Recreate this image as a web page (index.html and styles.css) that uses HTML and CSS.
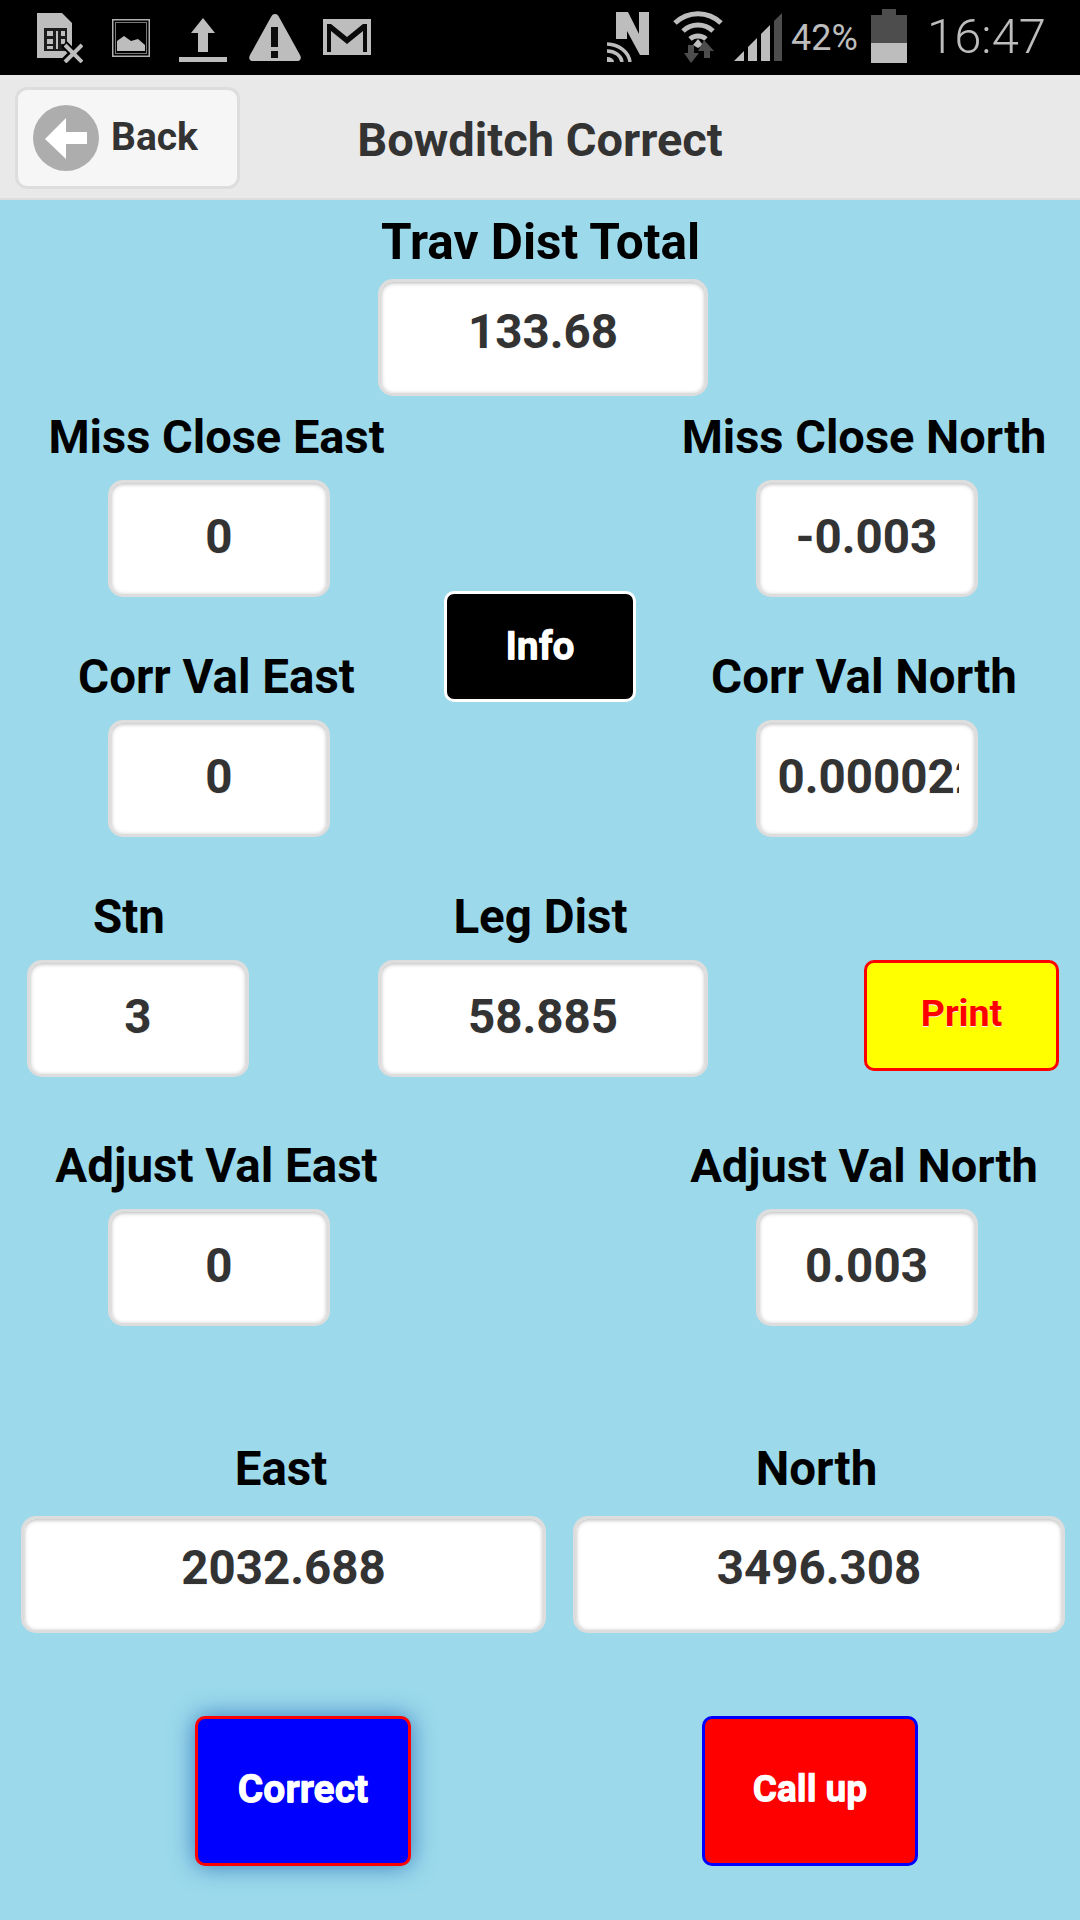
FILE: index.html
```html
<!DOCTYPE html>
<html lang="en">
<head>
    <meta charset="UTF-8">
    <meta name="viewport" content="width=device-width, initial-scale=1.0">
    <title>Bowditch Correct</title>
    <link rel="stylesheet" href="styles.css">
</head>
<body>
    <div class="status-bar">
        <div class="status-left">
            <svg class="ico-sim" width="46" height="50" viewBox="0 0 46 50">
                <path d="M0 0H25L35 10V36L27 45H0Z" fill="#bdbdbd"/>
                <path d="M7 15H30V38H7Z" fill="#1c1c1c"/>
                <path d="M10 18H16V23H10ZM10 26H16V31H10ZM10 33H16V36H10ZM19 18H21V36H19ZM24 18H28V23H24ZM24 26H28V31H24Z" fill="#bdbdbd"/>
                <path d="M27 31L45 49M45 31L27 49" stroke="#000" stroke-width="8"/>
                <path d="M28 32L45 49M45 32L28 49" stroke="#bdbdbd" stroke-width="4"/>
            </svg>
            <svg class="ico-img" width="38" height="38" viewBox="0 0 38 38">
                <rect x="0.75" y="0.75" width="36.5" height="36.5" fill="none" stroke="#b0b0b0" stroke-width="1.5"/>
                <rect x="3.5" y="3.5" width="31" height="31" fill="none" stroke="#7a7a7a" stroke-width="1"/>
                <path d="M5 32V22L12 17L19 22L26 20L33 26V32Z" fill="#bdbdbd"/>
            </svg>
            <svg class="ico-up" width="48" height="44" viewBox="0 0 48 44">
                <path d="M24 0L36 15H29V34H19V15H12Z" fill="#bdbdbd"/>
                <rect x="0" y="39" width="48" height="5" fill="#bdbdbd"/>
            </svg>
            <svg class="ico-warn" width="52" height="47" viewBox="0 0 52 47">
                <path d="M26 0C28 0 29 1 30 3L51 41C53 45 51 47 48 47H4C1 47 -1 45 1 41L22 3C23 1 24 0 26 0Z" fill="#bdbdbd"/>
                <path d="M22 13H29V33H22ZM22 37H29V44H22Z" fill="#0d0d0d"/>
            </svg>
            <svg class="ico-mail" width="48" height="36" viewBox="0 0 48 36">
                <rect width="48" height="36" fill="#bdbdbd"/>
                <path d="M4 33V5H8L24 18L40 5H44V33H40V12L24 25L8 12V33Z" fill="#0a0a0a"/>
            </svg>
        </div>
        <div class="status-right">
            <svg class="ico-n" width="44" height="50" viewBox="0 0 44 50">
                <path d="M9 0H21L32 22V0H42V43H33L20 19V27H9Z" fill="#bdbdbd"/>
                <path d="M0 32A24 20 0 0 1 23 50M0 39A15 12 0 0 1 15 50" fill="none" stroke="#bdbdbd" stroke-width="3.5"/>
                <path d="M0 45A7 5 0 0 1 7 50H0Z" fill="#bdbdbd"/>
            </svg>
            <svg class="ico-wifi" width="50" height="53" viewBox="0 0 50 53">
                <path d="M2 13A33 33 0 0 1 48 13M10 21A22 22 0 0 1 40 21M17 29A12 12 0 0 1 33 29" fill="none" stroke="#bdbdbd" stroke-width="5"/>
                <path d="M20 35L25 29L30 35L25 38Z" fill="#bdbdbd"/>
                <path d="M15 35H21V43H26L18 53L11 43H15Z" fill="#4d4d4d"/>
                <path d="M31 30L41 41H37V48H31V41H25Z" fill="#4d4d4d"/>
            </svg>
            <svg class="ico-signal" width="48" height="48" viewBox="0 0 48 48">
                <path d="M0 48L10 38V48Z" fill="#bdbdbd"/>
                <path d="M14 34L23 25V48H14Z" fill="#bdbdbd"/>
                <path d="M27 21L36 12V48H27Z" fill="#bdbdbd"/>
                <path d="M40 8L48 0V48H40Z" fill="#4d4d4d"/>
            </svg>
            <span class="battery-pct">42%</span>
            <div class="battery">
                <div class="battery-cap"></div>
                <div class="battery-body">
                    <div class="battery-level"></div>
                </div>
            </div>
            <span class="clock">16:47</span>
        </div>
    </div>

    <header class="header">
        <a class="back-btn" href="#">
            <svg width="66" height="66" viewBox="0 0 66 66">
                <circle cx="33" cy="33" r="33" fill="#adadad"/>
                <path d="M12 34L33 13V27H54V39H33V54Z" fill="#fff"/>
            </svg>
            <span>Back</span>
        </a>
        <h1 class="title">Bowditch Correct</h1>
    </header>

    <section class="content">
        <div class="row-top">
            <div class="field">
                <label>Trav Dist Total</label>
                <input class="wide" type="text" value="133.68" readonly>
            </div>
        </div>

        <div class="pair-grid closure">
            <div class="field">
                <label class="tight">Miss Close East</label>
                <input type="text" value="0" readonly>
            </div>
            <button class="btn btn-info">Info</button>
            <div class="field">
                <label class="tight">Miss Close North</label>
                <input type="text" value="-0.003" readonly>
            </div>
            <div class="field">
                <label>Corr Val East</label>
                <input type="text" value="0" readonly>
            </div>
            <div class="field">
                <label>Corr Val North</label>
                <input class="long" type="text" value="0.0000224" readonly>
            </div>
        </div>

        <div class="row-stn">
            <div class="field stn">
                <label>Stn</label>
                <input type="text" value="3" readonly>
            </div>
            <div class="field leg">
                <label>Leg Dist</label>
                <input class="wide" type="text" value="58.885" readonly>
            </div>
            <button class="btn btn-print">Print</button>
        </div>

        <div class="pair-grid adjust">
            <div class="field">
                <label>Adjust Val East</label>
                <input type="text" value="0" readonly>
            </div>
            <div></div>
            <div class="field">
                <label class="tight">Adjust Val North</label>
                <input type="text" value="0.003" readonly>
            </div>
        </div>

        <div class="row-coords">
            <div class="field east">
                <label>East</label>
                <input type="text" value="2032.688" readonly>
            </div>
            <div class="field north">
                <label>North</label>
                <input type="text" value="3496.308" readonly>
            </div>
        </div>

        <div class="row-actions">
            <button class="btn btn-correct">Correct</button>
            <button class="btn btn-callup">Call up</button>
        </div>
    </section>
</body>
</html>
```

FILE: styles.css
```css
* {
    box-sizing: border-box;
}

body {
    margin: 0;
    padding: 0;
    height: 1920px;
    overflow: hidden;
    font-family: Roboto, sans-serif;
    background: #9bd9eb;
}

/* Status bar */
.status-bar {
    height: 75px;
    background: #000;
    display: flex;
    justify-content: space-between;
    align-items: flex-start;
    color: #bdbdbd;
}

.status-left,
.status-right {
    display: flex;
    align-items: flex-start;
}

.status-left svg,
.status-right svg {
    display: block;
    flex: none;
}

.status-left {
    padding-left: 37px;
}

.ico-sim { margin-top: 13px; }
.ico-img { margin: 19px 0 0 29px; }
.ico-up { margin: 18px 0 0 29px; }
.ico-warn { margin: 14px 0 0 22px; }
.ico-mail { margin: 19px 0 0 22px; }

.status-right {
    padding-right: 34px;
}

.ico-n { margin-top: 12px; }
.ico-wifi { margin: 10px 0 0 22px; }
.ico-signal { margin: 13px 0 0 11px; }

.battery-pct {
    font-size: 36px;
    line-height: 36px;
    margin: 20px 0 0 9px;
    width: 72px;
}

.battery {
    width: 36px;
    margin: 9px 0 0 8px;
    display: flex;
    flex-direction: column;
    align-items: center;
}

.battery-cap {
    width: 14px;
    height: 6px;
    background: #4d4d4d;
}

.battery-body {
    width: 36px;
    height: 48px;
    background: #4d4d4d;
    display: flex;
    align-items: flex-end;
}

.battery-level {
    width: 100%;
    height: 20px;
    background: #bdbdbd;
}

.clock {
    font-size: 49px;
    font-weight: 300;
    line-height: 48px;
    margin: 13px 0 0 20px;
}

/* Header */
.header {
    height: 125px;
    background: #e9e9e9;
    border-bottom: 2px solid #ddd;
    padding: 12px 15px 0;
    display: grid;
    grid-template-columns: 1fr auto 1fr;
    align-items: start;
}

.back-btn {
    width: 225px;
    height: 102px;
    background: #f6f6f6;
    border: 3px solid #ddd;
    border-radius: 12px;
    padding: 0 0 2px 15px;
    display: flex;
    align-items: center;
    gap: 12px;
    color: #333;
    font-size: 39px;
    font-weight: 700;
    text-decoration: none;
}

.back-btn svg {
    margin-top: 2px;
}

.title {
    grid-column: 2;
    margin: 2px 0 0;
    font-size: 47px;
    line-height: 102px;
    font-weight: 700;
    color: #333;
}

/* Fields */
.field {
    display: flex;
    flex-direction: column;
    align-items: center;
}

.field label {
    height: 50px;
    line-height: 52px;
    margin-bottom: 19px;
    padding-right: 5px;
    font-size: 47.5px;
    font-weight: 700;
    color: #000;
    white-space: nowrap;
}

.field label.tight {
    font-size: 47px;
}

.field input {
    display: block;
    width: 222px;
    height: 117px;
    padding: 0 20px 4px;
    border: 3px solid #ddd;
    border-radius: 15px;
    background: #fff;
    box-shadow: inset 0 1px 4px rgba(0, 0, 0, 0.3);
    font-family: Roboto, sans-serif;
    font-size: 47.5px;
    font-weight: 700;
    color: #333;
    text-align: center;
    text-shadow: 0 1px 0 #f3f3f3;
    outline: none;
}

.field input.wide {
    width: 330px;
}

.field input.long {
    padding-left: 19px;
    padding-right: 16px;
}

.row-top {
    margin-top: 16px;
    padding-left: 6px;
    display: flex;
    justify-content: center;
}

.row-top .field label {
    margin-bottom: 13px;
    font-size: 49.5px;
}

.row-top .field input {
    padding-bottom: 12px;
}

.pair-grid {
    padding: 0 102px 0 108px;
    display: grid;
    grid-template-columns: 222px 1fr 223px;
}

.closure {
    margin-top: 15px;
    row-gap: 54px;
}

.btn-info {
    grid-column: 2;
    grid-row: 1 / 3;
    justify-self: center;
    align-self: start;
    margin: 180px 5px 0 0;
    width: 192px;
    height: 111px;
}

.adjust {
    margin-top: 63px;
}

.row-stn {
    margin-top: 54px;
    padding-left: 27px;
    display: flex;
    align-items: flex-end;
}

.stn label {
    padding-right: 18px;
}

.leg {
    margin-left: 129px;
}

.row-coords {
    margin-top: 117px;
    padding-left: 21px;
    display: flex;
}

.row-coords .field label {
    margin-bottom: 23px;
}

.row-coords .field input {
    padding-bottom: 14px;
}

.east input {
    width: 525px;
}

.north {
    margin-left: 27px;
}

.north input {
    width: 492px;
}

.row-actions {
    margin-top: 83px;
    padding-left: 195px;
    display: flex;
}

/* Buttons */
.btn {
    padding: 0;
    border-radius: 10px;
    font-family: Roboto, sans-serif;
    font-weight: 700;
    text-shadow: 0 1px 0 #f3f3f3;
    cursor: pointer;
}

.btn-info {
    padding-bottom: 2px;
    background: #000;
    border: 3px solid #fff;
    color: #fff;
    font-size: 39px;
    -webkit-text-stroke: 0.5px #fff;
}

.btn-print {
    width: 195px;
    height: 111px;
    margin: 0 0 6px 156px;
    padding-bottom: 5px;
    background: #ff0;
    border: 3px solid #f00;
    color: #f00;
    font-size: 37.5px;
}

.btn-correct,
.btn-callup {
    width: 216px;
    height: 150px;
    padding-bottom: 5px;
    color: #fff;
    -webkit-text-stroke: 0.7px #fff;
}

.btn-correct {
    background: #00f;
    border: 3px solid #f00;
    box-shadow: 0 0 24px #387bbe;
    font-size: 39px;
}

.btn-callup {
    margin-left: 291px;
    background: #f00;
    border: 3px solid #00f;
    font-size: 37px;
}
```
